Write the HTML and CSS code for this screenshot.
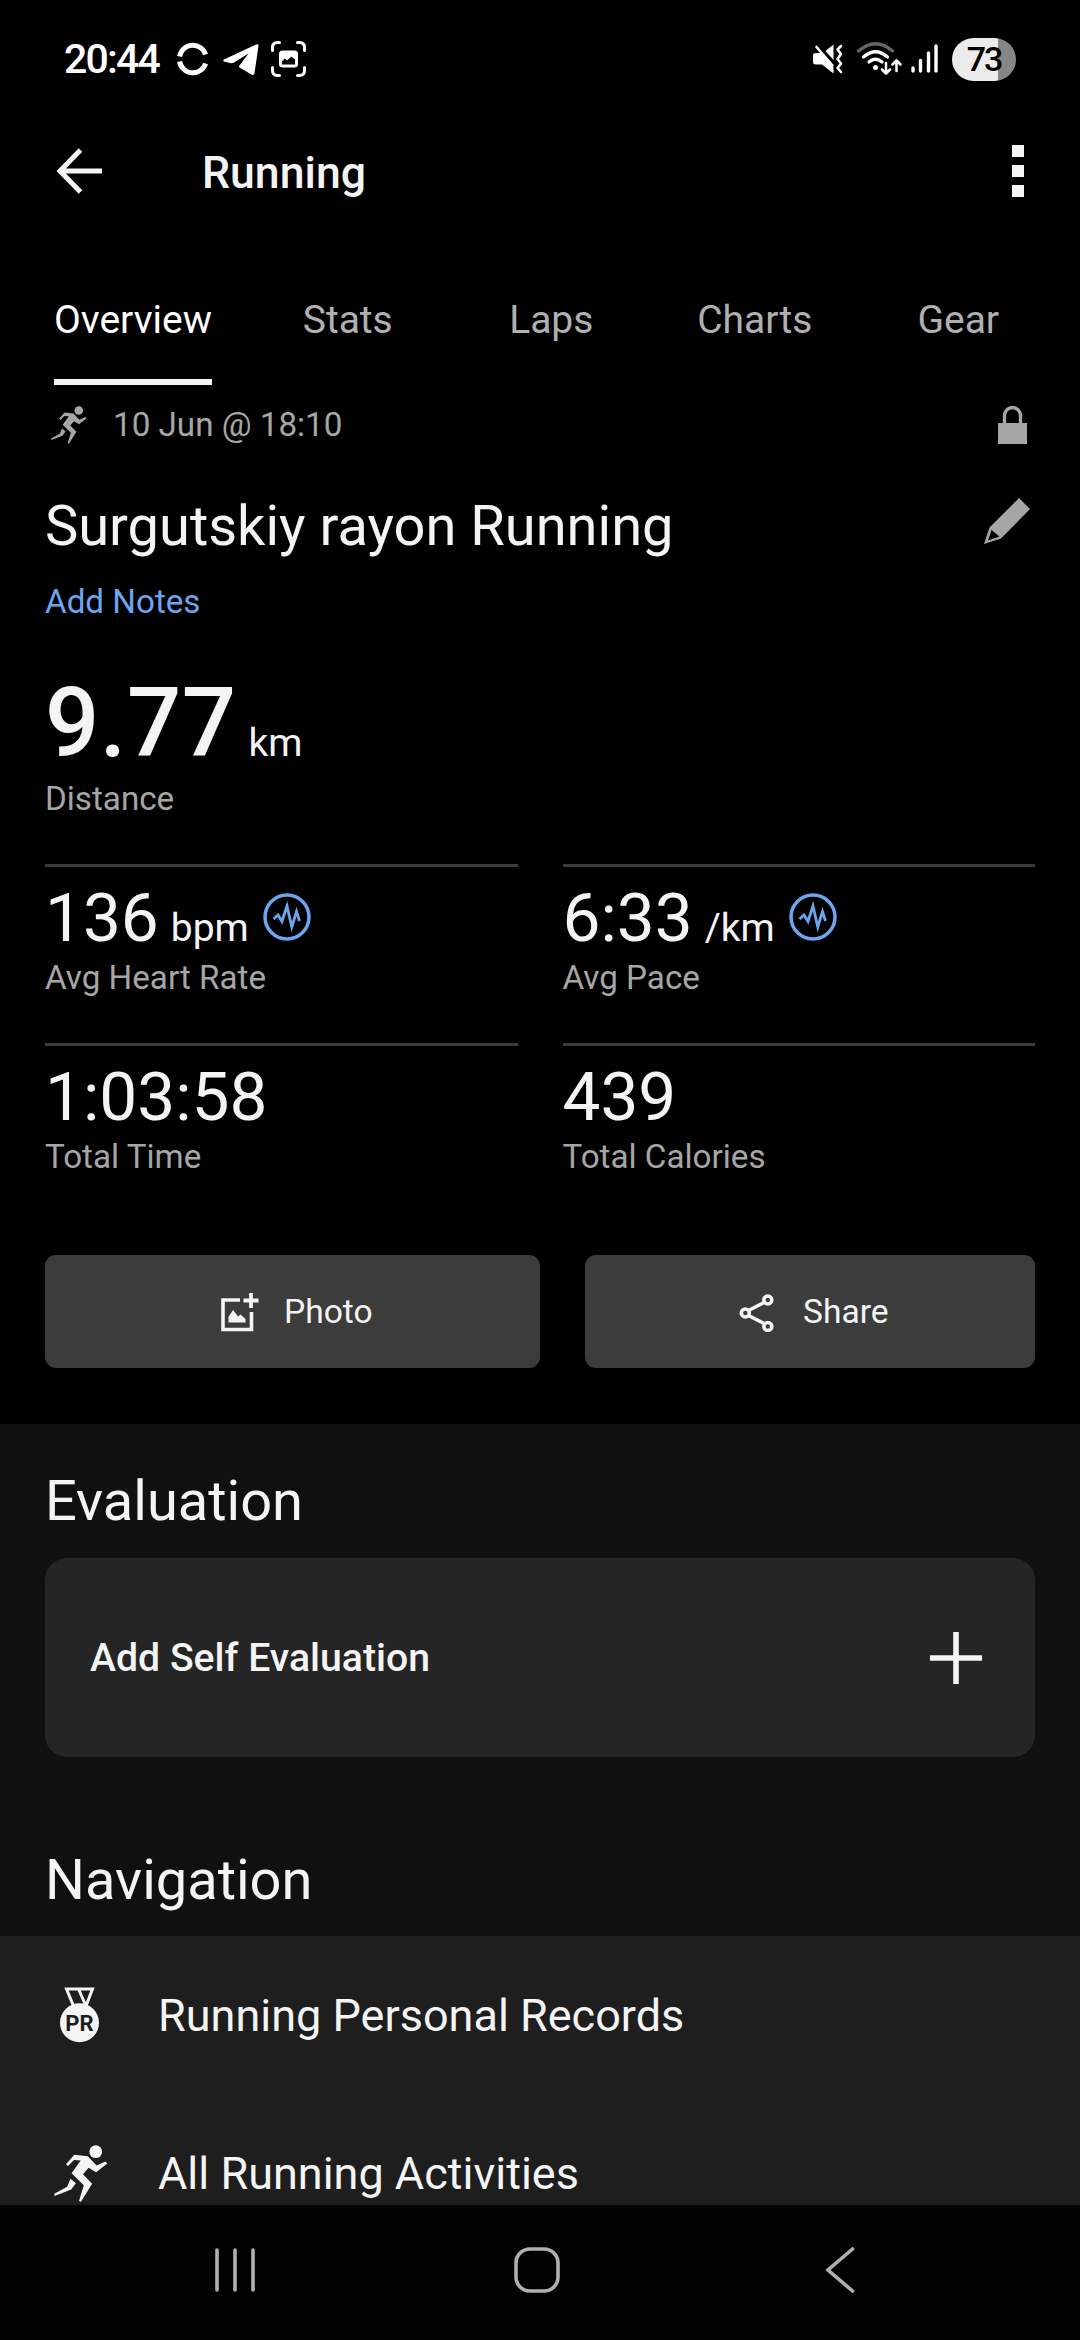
FILE: index.html
```html
<!DOCTYPE html>
<html lang="en">

<head>
    <meta charset="UTF-8">
    <meta name="viewport" content="width=device-width, initial-scale=1.0">
    <title>Running</title>
    <link rel="stylesheet" href="styles.css">
</head>

<body>
    <div class="status-bar">
        <span class="clock">20:44</span>
        <!-- notification icons -->
        <svg class="status-left" width="130" height="38" viewBox="0 0 130 38">
            <g fill="none" stroke="#fff" stroke-width="5">
                <path d="M2.6 16.5A13.4 13.4 0 0 1 28.6 14.5" />
                <path d="M2.6 21.5A13.4 13.4 0 0 0 28.6 23.5" />
            </g>
            <path fill="#fff" d="M47 19.5L79 4.5Q81.800 3.500 81.500 6L77.500 33Q77 36 74.500 34.500L62.500 27.500Q61.500 26.500 62.500 25.500L71.500 13.500L57 22.500Q55 23.500 53 23L47 21.500Q45.500 20.500 47 19.500Z" />
            <g fill="none" stroke="#fff" stroke-width="3" stroke-linecap="round">
                <path d="M95.500 10.500V7.500Q95.500 2.500 100.500 2.500H102.500" />
                <path d="M120.500 2.500H122.500Q127.500 2.500 127.500 7.500V10.500" />
                <path d="M127.500 27.500V30.500Q127.500 35.500 122.500 35.500H120.500" />
                <path d="M102.500 35.500H100.500Q95.500 35.500 95.500 30.500V27.500" />
            </g>
            <rect x="102" y="10.500" width="19" height="17" rx="3.500" fill="#fff" />
            <path fill="#000" d="M105 24.500V21.500L108 18.500L110 20.500L114.500 16.500L118 19.500V24.500Z" />
        </svg>
        <!-- sound, wifi, signal -->
        <svg class="status-right" width="128" height="38" viewBox="0 0 128 38">
            <path fill="#fff" d="M0 15.500Q0 13 3 13H7.500L20.500 27.500V33.500L9 24.500H3Q0 24.500 0 22ZM20.500 4.500V20L12.500 11Z" />
            <path fill="none" stroke="#fff" stroke-width="2.600" stroke-linecap="round" d="M3.500 7L19.500 25.500" />
            <path fill="none" stroke="#fff" stroke-width="2.500" stroke-linecap="round" stroke-linejoin="round" d="M28 6L24.500 9.500L28 14L24.500 19L28 23.500L24.500 28L28 32" />
            <g fill="none" stroke-width="3.200" stroke-linecap="round">
                <path stroke="#666" d="M45.500 11Q62.500 -3.500 79.500 11" />
                <path stroke="#fff" d="M50.500 17Q62.500 6.500 74.500 17" />
                <path stroke="#fff" d="M56 22Q62.500 16.500 69 22" />
            </g>
            <circle cx="62.500" cy="27.500" r="2.500" fill="#fff" />
            <g fill="none" stroke="#fff" stroke-width="2.500" stroke-linecap="round" stroke-linejoin="round">
                <path d="M73 23V33M69 29.500L73 33.500L77 29.500" />
                <path d="M83.500 31V21M79.500 24.500L83.500 20.500L87.500 24.500" />
            </g>
            <path stroke="#fff" stroke-width="3.400" stroke-linecap="round" d="M100 28V31M107.500 20.500V31M115.500 13V31M123 6V31" />
        </svg>
        <span class="battery">73</span>
    </div>

    <header class="app-bar">
        <svg width="48" height="48" viewBox="0 0 48 48" fill="none" stroke="#f4f4f4" stroke-width="5">
            <path d="M46 24H5M24.500 3L4 24L24.500 45" />
        </svg>
        <h1>Running</h1>
        <div class="more">
            <i></i><i></i><i></i>
        </div>
    </header>

    <nav class="tabs">
        <div class="tab active"><span>Overview</span></div>
        <div class="tab"><span>Stats</span></div>
        <div class="tab"><span>Laps</span></div>
        <div class="tab"><span>Charts</span></div>
        <div class="tab"><span>Gear</span></div>
    </nav>

    <main>
        <section class="summary">
            <div class="date-row">
                <svg class="runner" width="36" height="38" viewBox="0 0 54 57">
                    <use href="#runner" />
                </svg>
                <span>10 Jun @ 18:10</span>
                <svg class="lock" width="29" height="38" viewBox="0 0 29 38">
                    <path fill="none" stroke="#a6a6a6" stroke-width="3.400" d="M6.500 18V9.500A8 8 0 0 1 22.500 9.500V18" />
                    <rect y="17" width="29" height="21" fill="#a6a6a6" />
                </svg>
            </div>
            <div class="title-row">
                <h2>Surgutskiy rayon Running</h2>
                <svg width="46" height="46" viewBox="0 0 46 46">
                    <path fill="#a6a6a6" fill-rule="evenodd" d="M35 0L46 11L17 40.500L0 46L5.500 29.500ZM7.500 32L4 42.500L15.500 38.500Z" />
                </svg>
            </div>
            <a class="notes">Add Notes</a>

            <div class="distance">
                <p class="value">9.77<small>km</small></p>
                <p class="label">Distance</p>
            </div>

            <div class="metrics">
                <div class="metric">
                    <p class="value">136<small>bpm</small>
                        <svg class="pulse" width="48" height="48" viewBox="0 0 48 48"><use href="#pulse" /></svg>
                    </p>
                    <p class="label">Avg Heart Rate</p>
                </div>
                <div class="metric">
                    <p class="value">6:33<small>/km</small>
                        <svg class="pulse" width="48" height="48" viewBox="0 0 48 48"><use href="#pulse" /></svg>
                    </p>
                    <p class="label">Avg Pace</p>
                </div>
                <div class="metric">
                    <p class="value">1:03:58</p>
                    <p class="label">Total Time</p>
                </div>
                <div class="metric">
                    <p class="value">439</p>
                    <p class="label">Total Calories</p>
                </div>
            </div>

            <div class="actions">
                <button type="button" class="photo">
                    <svg width="40" height="40" viewBox="0 0 40 40">
                        <path fill="none" stroke="#f4f4f4" stroke-width="3.600" d="M20 8H3V37.500H31.500V20" />
                        <path stroke="#f4f4f4" stroke-width="3.800" d="M23.500 8.500H38.500M31 1V16" />
                        <path fill="#f4f4f4" d="M8.500 30.500V25L13 18L18 24.500L20.500 22.500L25.500 27V30.500Z" />
                    </svg>
                    Photo
                </button>
                <button type="button" class="share">
                    <svg width="36" height="40" viewBox="0 0 36 40" fill="none" stroke="#f4f4f4" stroke-width="3.600">
                        <path d="M9.500 18.500L25 10.500M9.500 23.500L25 31.500" />
                        <circle cx="6.300" cy="21" r="4" />
                        <circle cx="28.800" cy="8" r="4" />
                        <circle cx="28.800" cy="34.500" r="4" />
                    </svg>
                    Share
                </button>
            </div>
        </section>

        <section class="evaluation">
            <h2>Evaluation</h2>
            <div class="card">
                <span>Add Self Evaluation</span>
                <svg width="52" height="52" viewBox="0 0 52 52" stroke="#f4f4f4" stroke-width="5.600">
                    <path d="M0 26H52M26 0V52" />
                </svg>
            </div>
        </section>

        <section class="navigation">
            <h2>Navigation</h2>
            <div class="list">
                <div class="row">
                    <svg width="54" height="57" viewBox="0 0 54 57">
                        <path fill="none" stroke="#f4f4f4" stroke-width="3" d="M19.500 19L12.500 2H38.500L32 19M24.500 2L32 19" />
                        <circle cx="25.500" cy="35.800" r="19.500" fill="#f4f4f4" />
                        <text class="pr" x="25.500" y="43.800" text-anchor="middle">PR</text>
                    </svg>
                    <span>Running Personal Records</span>
                </div>
                <div class="row">
                    <svg class="runner" width="54" height="57" viewBox="0 0 54 57">
                        <use href="#runner" />
                    </svg>
                    <span>All Running Activities</span>
                </div>
            </div>
        </section>
    </main>

    <footer class="nav-bar">
        <svg width="40" height="44" viewBox="0 0 40 44">
            <path d="M2 2V42M20 2V42M38 2V42" />
        </svg>
        <svg class="home" width="46" height="46" viewBox="0 0 46 46">
            <rect x="2" y="2" width="42" height="42" rx="14" />
        </svg>
        <svg class="back" width="30" height="46" viewBox="0 0 30 46">
            <path d="M27.500 2L3 23L27.500 44" />
        </svg>
    </footer>

    <!-- shared icons -->
    <svg class="symbols">
        <symbol id="runner" viewBox="0 0 54 57">
            <circle cx="41.700" cy="6.700" r="6.400" />
            <path d="M20.300 9.700L33.800 11.300L42.500 20.500L51.500 16.500L53.300 18.500L42.100 27.200L34.600 22.700L29 29.300L38.100 38.700L27 56.700L25 56L29.800 40.300L17.600 28.300L26.700 15.500L20 15L14 21L12 19.300Z" />
            <path d="M16.400 33.700L21.900 38.300L17.200 44.500L0.600 50.900L0.200 48.700L13.200 41.700Z" />
        </symbol>
        <symbol id="pulse" viewBox="0 0 48 48">
            <circle cx="24" cy="24" r="22" fill="none" stroke="#6ca6f0" stroke-width="3.500" />
            <path fill="none" stroke="#6ca6f0" stroke-width="2.800" d="M10.500 26L15 22L19 28.500L24 13L28.800 34L33.500 18.500L36.500 28" />
        </symbol>
    </svg>
</body>

</html>
```

FILE: styles.css
```css
* {
    box-sizing: border-box;
}

body {
    display: flex;
    flex-direction: column;
    width: 1080px;
    height: 2340px;
    margin: 0;
    background-color: #000;
    color: #f4f4f4;
    font-family: Roboto, sans-serif;
    overflow: hidden;
}

h1,
h2,
p {
    margin: 0;
    font-weight: 400;
}

svg {
    flex-shrink: 0;
}

.symbols {
    display: none;
}

/* status bar */
.status-bar {
    display: flex;
    align-items: center;
    flex-shrink: 0;
    height: 118px;
    padding: 0 64px;
}

.clock {
    width: 113px;
    color: #fff;
    font-size: 41px;
    font-weight: 500;
    letter-spacing: -1.8px;
}

.status-right {
    margin-left: auto;
}

.battery {
    width: 64px;
    height: 43px;
    margin-left: 11px;
    border-radius: 22px;
    background: linear-gradient(to right, #ececec 46px, #868686 46px);
    color: #000;
    font-size: 34px;
    font-weight: 500;
    line-height: 43px;
    letter-spacing: -2px;
    text-align: center;
}

/* app bar */
.app-bar {
    display: flex;
    align-items: center;
    flex-shrink: 0;
    height: 106px;
    padding: 0 56px;
}

.app-bar h1 {
    margin: 3px 0 0 98px;
    font-size: 44.6px;
    font-weight: 500;
}

.more {
    display: flex;
    flex-direction: column;
    gap: 8px;
    margin-left: auto;
}

.more i {
    width: 12px;
    height: 12px;
    background-color: #f4f4f4;
}

/* tabs */
.tabs {
    display: flex;
    flex-shrink: 0;
    height: 161px;
    padding-left: 20px;
}

.tab {
    display: flex;
    justify-content: center;
    width: 203.5px;
    color: #b0b0b0;
    font-size: 39px;
    line-height: 40px;
}

.tab span {
    padding-top: 76px;
}

.tab.active {
    width: 226px;
    color: #fff;
}

.tab.active span {
    border-bottom: 6px solid #f4f4f4;
}

main {
    flex: 1;
    min-height: 0;
    overflow: hidden;
}

/* summary */
.summary {
    height: 1039px;
    padding: 0 45px;
}

.date-row {
    display: flex;
    align-items: center;
    height: 79px;
    padding: 0 8px 0 6px;
    color: #a6a6a6;
    font-size: 33.2px;
}

.date-row span {
    margin-left: 26px;
}

.runner {
    fill: currentColor;
}

.lock {
    margin-left: auto;
}

.title-row {
    display: flex;
    justify-content: space-between;
    margin-top: 29px;
    padding-right: 5px;
}

h2 {
    font-size: 56px;
    line-height: 66px;
}

.title-row svg {
    margin-top: 5px;
}

.notes {
    display: block;
    margin-top: 23px;
    color: #6ca6f0;
    font-size: 33.2px;
    line-height: 40px;
}

.distance {
    margin-top: 45px;
}

.value {
    display: flex;
    align-items: baseline;
}

.value small {
    font-size: 39px;
    font-weight: 400;
    letter-spacing: 0;
}

.distance .value {
    height: 112px;
    font-size: 95.6px;
    font-weight: 500;
    line-height: 112px;
    letter-spacing: 0.5px;
}

.distance small {
    margin-left: 12px;
}

.label {
    color: #a6a6a6;
    font-size: 33.2px;
    line-height: 40px;
}

.metrics {
    display: grid;
    grid-template-columns: 1fr 1fr;
    column-gap: 45px;
    margin-top: 45px;
}

.metric {
    height: 179px;
    padding-top: 11px;
    border-top: 3px solid #3c3c3c;
}

.metric .value {
    height: 80px;
    font-size: 67.5px;
    line-height: 80px;
}

.metric small {
    margin-left: 12px;
}

.pulse {
    align-self: flex-start;
    margin: 15px 0 0 14px;
}

.actions {
    display: flex;
    gap: 45px;
    margin-top: 33px;
}

.actions button {
    display: flex;
    align-items: center;
    height: 113px;
    border: none;
    border-radius: 11px;
    background-color: #3c3c3c;
    color: #f4f4f4;
    font-family: inherit;
    font-size: 33.6px;
}

.actions .photo {
    gap: 24px;
    width: 495px;
    padding: 0 0 0 175px;
}

.actions .share {
    gap: 28px;
    width: 450px;
    padding: 0 0 0 154px;
}

/* evaluation */
.evaluation {
    height: 333px;
    padding: 44px 45px 0;
    background-color: #101010;
}

.card {
    display: flex;
    align-items: center;
    justify-content: space-between;
    height: 199px;
    margin-top: 24px;
    padding: 0 53px 0 45px;
    border-radius: 22px;
    background-color: #252525;
    font-size: 39.2px;
    font-weight: 500;
}

/* navigation */
.navigation {
    padding-top: 90px;
    background-color: #101010;
}

.navigation h2 {
    padding: 0 45px 23px;
}

.list {
    background-color: #1e1e1e;
}

.row {
    display: flex;
    align-items: center;
    gap: 50px;
    height: 158px;
    padding-left: 54px;
    font-size: 45px;
}

.pr {
    fill: #1e1e1e;
    font-size: 22px;
    font-weight: 700;
}

/* system buttons */
.nav-bar {
    display: flex;
    align-items: center;
    flex-shrink: 0;
    height: 135px;
    padding: 0 0 5px 215px;
    background-color: #020202;
}

.nav-bar svg {
    fill: none;
    stroke: #b0b0b0;
    stroke-width: 3.6;
    stroke-linecap: round;
}

.nav-bar .home {
    margin-left: 259px;
}

.nav-bar .back {
    margin-left: 265px;
}
```
